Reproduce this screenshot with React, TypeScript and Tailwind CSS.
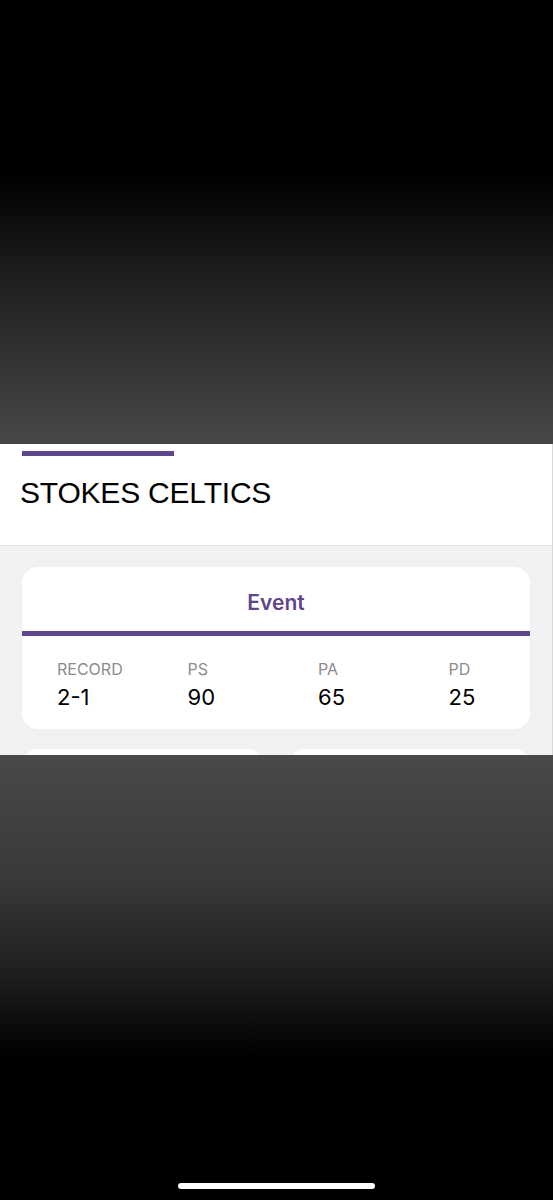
const stats = [
  { label: "RECORD", value: "2-1" },
  { label: "PS", value: "90" },
  { label: "PA", value: "65" },
  { label: "PD", value: "25" },
];

export default function App() {
  return (
    <div className="w-[553px] h-[1200px] flex flex-col bg-black font-['Liberation_Sans',Arial,sans-serif] overflow-hidden">
      {/* top blurred backdrop */}
      <div className="h-[444px] bg-[linear-gradient(to_bottom,#000_0px,#000_175px,#1c1c1c_270px,#353535_365px,#474747_444px)]" />

      {/* team header */}
      <div className="h-[102px] bg-white border-r border-[#d8d8d8] border-b border-b-[#e2e3e6] px-[20px] pt-[7px]">
        <div className="w-[152px] h-[5px] bg-[#5f4589] ml-[2px]" />
        <h1 className="mt-[19px] text-[30px] leading-[36px] text-black tracking-[-0.2px]">
          STOKES CELTICS
        </h1>
      </div>

      {/* stats area */}
      <div className="h-[209px] bg-[#f0f1f3] border-r border-[#d8d8d8] px-[22px] pt-[21px] overflow-hidden">
        <div className="bg-white rounded-[16px] h-[162px] flex flex-col">
          <div className="h-[64px] flex items-center justify-center pt-[7px]">
            <span className="text-[21px] font-semibold text-[#5f4589] font-['Inter',sans-serif]">
              Event
            </span>
          </div>
          <div className="h-[5px] bg-[#5f4589]" />
          <div className="flex pl-[35px] pt-[23px]">
            {stats.map((s, i) => (
              <div key={s.label} className={i < 3 ? "w-[130.5px]" : "flex-1"}>
                <div className="text-[16px] leading-[20px] text-[#8c8c8c] font-['Inter',sans-serif]">
                  {s.label}
                </div>
                <div className="mt-[3px] text-[22px] leading-[30px] text-black font-['Inter',sans-serif]">
                  {s.value}
                </div>
              </div>
            ))}
          </div>
        </div>
        <div className="flex gap-[25px] mt-[20px]">
          <div className="flex-1 h-[40px] bg-white rounded-[16px]" />
          <div className="flex-1 h-[40px] bg-white rounded-[16px]" />
        </div>
      </div>

      {/* bottom blurred backdrop */}
      <div className="flex-1 flex flex-col justify-end items-center pb-[11px] bg-[linear-gradient(to_bottom,#494949_0px,#3a3a3a_120px,#1e1e1e_220px,#000_300px,#000_100%)]">
        <div className="w-[197px] h-[6px] rounded-full bg-white" />
      </div>
    </div>
  );
}
